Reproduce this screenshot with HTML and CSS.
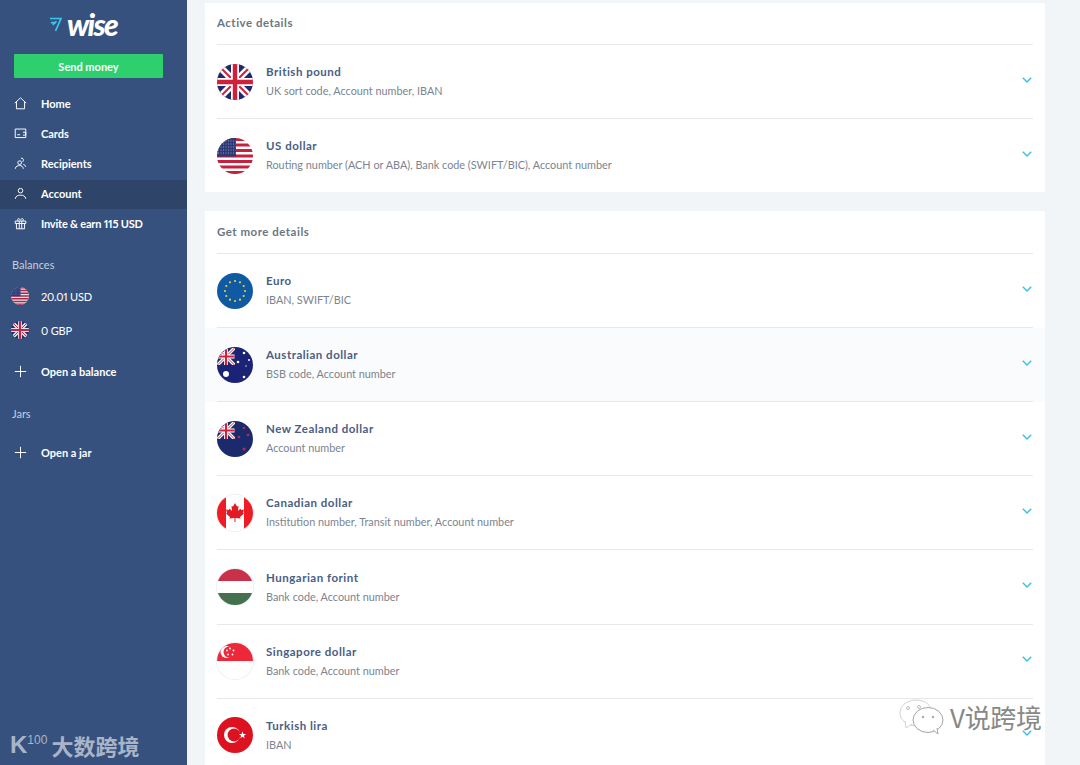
FILE: index.html
```html
<!DOCTYPE html>
<html lang="en">
<head>
    <meta charset="UTF-8">
    <meta name="viewport" content="width=device-width, initial-scale=1.0">
    <title>Wise - Account details</title>
    <link rel="stylesheet" href="styles.css">
</head>
<body>

    <svg class="defs" width="0" height="0">
        <defs>
            <symbol id="union" viewBox="0 0 36 36">
                <rect width="36" height="36" fill="#1f2a6d"/>
                <path d="M0 0L36 36M36 0L0 36" stroke="#fff" stroke-width="7"/>
                <path d="M0 0L36 36M36 0L0 36" stroke="#d3203a" stroke-width="2"/>
                <path d="M18 0V36M0 18H36" stroke="#fff" stroke-width="8"/>
                <path d="M18 0V36M0 18H36" stroke="#d3203a" stroke-width="4.4"/>
            </symbol>
            <symbol id="usa" viewBox="0 0 36 36">
                <rect width="36" height="36" fill="#fff"/>
                <path d="M0 1.5H36M0 7H36M0 12.5H36M0 18H36M0 23.500H36M0 29H36M0 34.500H36" stroke="#c5203e" stroke-width="2.800"/>
                <rect width="19" height="18.500" fill="#2b3a75"/>
                <path d="M1 3H19M1 6H19M1 9H19M1 12H19M1 15H19" stroke="#8f9ac0" stroke-width="1" stroke-dasharray="1 1.500"/>
            </symbol>
        </defs>
    </svg>

    <div class="app">
        <aside class="sidebar">
            <div class="logo">
                <svg class="logo-mark" viewBox="0 0 14 16" width="13" height="15"><path d="M1 1.500H13L7 15M2 6H6.500L4 8.500M8 4.500L6 7" fill="none" stroke="#38c6ee" stroke-width="1.800"/></svg>
                <span class="logo-text">wise</span>
            </div>
            <button class="send-btn">Send money</button>

            <nav class="nav">
                <a class="nav-item">
                    <svg class="nav-icon" viewBox="0 0 16 16"><path d="M1 7.500L8 1L15 7.500M3 6V14.500H13V6"/></svg>
                    Home
                </a>
                <a class="nav-item">
                    <svg class="nav-icon" viewBox="0 0 16 16"><path d="M1.500 2.500H14.500V13H1.500ZM4 9.500H7.500M11 10H14.500V6.500H11"/></svg>
                    Cards
                </a>
                <a class="nav-item">
                    <svg class="nav-icon" viewBox="0 0 16 16"><circle cx="7" cy="7" r="2.300"/><path d="M1.500 14.500C2 11 5 10.500 7 10.500C9 10.500 11 11.500 11.500 14.500M8.500 1.500C10.500 1 12 2.500 11.500 4.500C11.300 5 11 5.500 10.500 6M11.500 9C13 9.500 14 10.500 14.500 12"/></svg>
                    Recipients
                </a>
                <a class="nav-item active">
                    <svg class="nav-icon" viewBox="0 0 16 16"><circle cx="8" cy="4.500" r="2.800"/><path d="M1.500 14.500C2 11 5 10 8 10C11 10 14 11 14.500 14.500"/></svg>
                    Account
                </a>
                <a class="nav-item invite">
                    <svg class="nav-icon" viewBox="0 0 16 16"><path d="M1.500 5H14.500V8H1.500ZM3 8V14.500H13V8M6.500 5V14.500M9.500 5V14.500M5 5C3.500 2 6 0.500 8 4C10 0.500 12.500 2 11 5"/></svg>
                    Invite &amp; earn 115 USD
                </a>
            </nav>

            <div class="side-label balances-label">Balances</div>
            <a class="balance">
                <svg class="balance-flag"><use href="#usa"/></svg>
                20.01 USD
            </a>
            <a class="balance">
                <svg class="balance-flag"><use href="#union"/></svg>
                0 GBP
            </a>
            <a class="nav-item open-item">
                <svg class="nav-icon" viewBox="0 0 16 16"><path d="M8 1V15M1 8H15"/></svg>
                Open a balance
            </a>
            <div class="side-label jars-label">Jars</div>
            <a class="nav-item open-item">
                <svg class="nav-icon" viewBox="0 0 16 16"><path d="M8 1V15M1 8H15"/></svg>
                Open a jar
            </a>
        </aside>

        <main class="content">
            <section class="card">
                <h3 class="card-title">Active details</h3>
                <div class="row">
                    <div class="row-inner">
                        <svg class="flag"><use href="#union"/></svg>
                        <div class="row-text"><div class="currency">British pound</div><div class="fields">UK sort code, Account number, IBAN</div></div>
                        <svg class="chevron" viewBox="0 0 10 6"><path d="M0.800 0.800L5 5L9.200 0.800"/></svg>
                    </div>
                </div>
                <div class="row last">
                    <div class="row-inner">
                        <svg class="flag"><use href="#usa"/></svg>
                        <div class="row-text"><div class="currency">US dollar</div><div class="fields">Routing number (ACH or ABA), Bank code (SWIFT/BIC), Account number</div></div>
                        <svg class="chevron" viewBox="0 0 10 6"><path d="M0.800 0.800L5 5L9.200 0.800"/></svg>
                    </div>
                </div>
            </section>

            <section class="card">
                <h3 class="card-title tall">Get more details</h3>
                <div class="row">
                    <div class="row-inner">
                        <svg class="flag" viewBox="0 0 36 36">
                            <rect width="36" height="36" fill="#0f5aa3"/>
                            <g fill="#e3d23c"><circle cx="18" cy="8" r="1.100"/><circle cx="23" cy="9.300" r="1.100"/><circle cx="26.700" cy="13" r="1.100"/><circle cx="28" cy="18" r="1.100"/><circle cx="26.700" cy="23" r="1.100"/><circle cx="23" cy="26.700" r="1.100"/><circle cx="18" cy="28" r="1.100"/><circle cx="13" cy="26.700" r="1.100"/><circle cx="9.300" cy="23" r="1.100"/><circle cx="8" cy="18" r="1.100"/><circle cx="9.300" cy="13" r="1.100"/><circle cx="13" cy="9.300" r="1.100"/></g>
                        </svg>
                        <div class="row-text"><div class="currency">Euro</div><div class="fields">IBAN, SWIFT/BIC</div></div>
                        <svg class="chevron" viewBox="0 0 10 6"><path d="M0.800 0.800L5 5L9.200 0.800"/></svg>
                    </div>
                </div>
                <div class="row hovered">
                    <div class="row-inner">
                        <svg class="flag" viewBox="0 0 36 36">
                            <rect width="36" height="36" fill="#1a2376"/>
                            <use href="#union" x="0" y="1" width="18" height="17"/>
                            <g fill="#fff"><circle cx="9" cy="27" r="3"/><circle cx="27" cy="6" r="1.300"/><circle cx="21" cy="15" r="1.300"/><circle cx="32" cy="13" r="1"/><circle cx="27" cy="30" r="1.300"/><circle cx="29" cy="19" r="0.700"/></g>
                        </svg>
                        <div class="row-text"><div class="currency">Australian dollar</div><div class="fields">BSB code, Account number</div></div>
                        <svg class="chevron" viewBox="0 0 10 6"><path d="M0.800 0.800L5 5L9.200 0.800"/></svg>
                    </div>
                </div>
                <div class="row">
                    <div class="row-inner">
                        <svg class="flag" viewBox="0 0 36 36">
                            <rect width="36" height="36" fill="#1a2a6c"/>
                            <use href="#union" x="0" y="1" width="18" height="17"/>
                            <g fill="#c2264a"><circle cx="27" cy="7" r="1.300"/><circle cx="22" cy="16" r="1.300"/><circle cx="31" cy="14" r="1.300"/><circle cx="27" cy="28" r="1.500"/></g>
                        </svg>
                        <div class="row-text"><div class="currency">New Zealand dollar</div><div class="fields">Account number</div></div>
                        <svg class="chevron" viewBox="0 0 10 6"><path d="M0.800 0.800L5 5L9.200 0.800"/></svg>
                    </div>
                </div>
                <div class="row">
                    <div class="row-inner">
                        <svg class="flag outlined" viewBox="0 0 36 36">
                            <rect width="36" height="36" fill="#fff"/>
                            <path d="M0 0H9V36H0ZM27 0H36V36H27Z" fill="#ee1c25"/>
                            <path d="M18 8L20 11.500L21.500 11L21 16L23.500 13.500L24 15L27 14.500L26 18L27 18.500L23 22L23.500 23.500L18.500 23V27H17.500V23L12.500 23.500L13 22L9 18.500L10 18L9 14.500L12 15L12.500 13.500L15 16L14.500 11L16 11.500Z" fill="#e01b24"/>
                        </svg>
                        <div class="row-text"><div class="currency">Canadian dollar</div><div class="fields">Institution number, Transit number, Account number</div></div>
                        <svg class="chevron" viewBox="0 0 10 6"><path d="M0.800 0.800L5 5L9.200 0.800"/></svg>
                    </div>
                </div>
                <div class="row">
                    <div class="row-inner">
                        <svg class="flag outlined" viewBox="0 0 36 36">
                            <rect width="36" height="12" fill="#c9304a"/>
                            <rect y="12" width="36" height="12" fill="#fff"/>
                            <rect y="24" width="36" height="12" fill="#44704f"/>
                        </svg>
                        <div class="row-text"><div class="currency">Hungarian forint</div><div class="fields">Bank code, Account number</div></div>
                        <svg class="chevron" viewBox="0 0 10 6"><path d="M0.800 0.800L5 5L9.200 0.800"/></svg>
                    </div>
                </div>
                <div class="row">
                    <div class="row-inner">
                        <svg class="flag outlined" viewBox="0 0 36 36">
                            <rect width="36" height="18" fill="#ed2939"/>
                            <rect y="18" width="36" height="18" fill="#fff"/>
                            <circle cx="9.500" cy="9" r="6" fill="#fff"/>
                            <circle cx="12" cy="9" r="5.500" fill="#ed2939"/>
                            <g fill="#fff"><circle cx="13" cy="5.500" r="0.900"/><circle cx="16.500" cy="7.500" r="0.900"/><circle cx="15.500" cy="11.500" r="0.900"/><circle cx="11" cy="11.500" r="0.900"/><circle cx="10" cy="7.500" r="0.900"/></g>
                        </svg>
                        <div class="row-text"><div class="currency">Singapore dollar</div><div class="fields">Bank code, Account number</div></div>
                        <svg class="chevron" viewBox="0 0 10 6"><path d="M0.800 0.800L5 5L9.200 0.800"/></svg>
                    </div>
                </div>
                <div class="row last">
                    <div class="row-inner">
                        <svg class="flag" viewBox="0 0 36 36">
                            <rect width="36" height="36" fill="#dc1221"/>
                            <circle cx="15" cy="18" r="8" fill="#fff"/>
                            <circle cx="17" cy="18" r="6.400" fill="#dc1221"/>
                            <path d="M25.500 14.500L26.400 17.100L29 17.100L26.900 18.700L27.700 21.300L25.500 19.700L23.300 21.300L24.100 18.700L22 17.100L24.600 17.100Z" fill="#fff"/>
                        </svg>
                        <div class="row-text"><div class="currency">Turkish lira</div><div class="fields">IBAN</div></div>
                        <svg class="chevron" viewBox="0 0 10 6"><path d="M0.800 0.800L5 5L9.200 0.800"/></svg>
                    </div>
                </div>
            </section>
        </main>
    </div>

    <!-- watermarks over the screenshot -->
    <div class="mark-left">
        <span class="mark-logo">K<sup>100</sup></span>
        <span class="mark-name">大数跨境</span>
    </div>
    <div class="mark-right">
        <svg class="mark-bubbles" viewBox="0 0 46 36" width="46" height="36">
            <path d="M19 27C9 27 1 22 1 14C1 6 9 1 17 1C24 1 30 4 32 10" fill="#fff" stroke="#d2d2d2"/>
            <path d="M6 22L7 29L13 25" fill="#fff" stroke="#d2d2d2"/>
            <ellipse cx="29" cy="21" rx="15" ry="12.500" fill="#fff" stroke="#a5a5a5"/>
            <path d="M34 31L39 35L38 29" fill="#fff" stroke="#a5a5a5"/>
            <circle cx="9" cy="9" r="1.500" fill="none" stroke="#bbb"/>
            <circle cx="20" cy="8" r="1.500" fill="none" stroke="#bbb"/>
            <circle cx="24" cy="18" r="1.200" fill="#aaa"/>
            <circle cx="34" cy="18" r="1.200" fill="#aaa"/>
        </svg>
        <span class="mark-title">V说跨境</span>
    </div>

</body>
</html>
```

FILE: styles.css
```css
html, body {
    margin: 0;
    height: 765px;
    overflow: hidden;
}
body {
    font-family: Lato, Arial, sans-serif;
    font-variant-numeric: proportional-nums;
    background-color: #f2f5f7;
    position: relative;
}
.defs {
    position: absolute;
}
.app {
    display: flex;
    height: 765px;
}

/* sidebar */
.sidebar {
    width: 187px;
    flex: none;
    background: #37517e;
    color: white;
}
.logo {
    height: 54px;
    padding: 12px 0 0 49px;
    box-sizing: border-box;
    display: flex;
    gap: 5px;
}
.logo-mark {
    margin-top: 5px;
}
.logo-text {
    font-size: 30px;
    line-height: 24px;
    font-weight: 900;
    font-style: italic;
    letter-spacing: -1.700px;
}
.send-btn {
    display: block;
    width: 149px;
    height: 24px;
    margin: 0 0 12px 14px;
    background: #2ed06e;
    border: none;
    border-radius: 1px;
    color: white;
    font-family: inherit;
    font-size: 11px;
    font-weight: 700;
    padding: 0;
}
.nav {
    display: flex;
    flex-direction: column;
    gap: 1px;
}
.nav-item {
    display: flex;
    align-items: center;
    gap: 14px;
    height: 29px;
    box-sizing: border-box;
    padding: 0 0 2px 14px;
    font-size: 11px;
    font-weight: 700;
}
.nav-item.active {
    background: #2f4469;
}
.nav-item.invite {
    letter-spacing: -0.200px;
}
.nav-icon {
    width: 13px;
    height: 13px;
    flex: none;
    fill: none;
    stroke: white;
    stroke-width: 1.200;
}
.side-label {
    font-size: 11px;
    color: #c6cfdd;
    padding-left: 12px;
}
.balances-label {
    margin-top: 19px;
}
.jars-label {
    margin-top: 20px;
}
.balance {
    display: flex;
    align-items: center;
    gap: 12px;
    padding-left: 11px;
    margin-top: 16px;
    height: 18px;
    font-size: 11px;
    letter-spacing: -0.200px;
}
.balance-flag {
    width: 18px;
    height: 18px;
    border-radius: 50%;
    opacity: 0.85;
}
.open-item {
    margin-top: 19px;
}

/* main column */
.content {
    flex: 1;
    padding: 3px 35px 0 18px;
    display: flex;
    flex-direction: column;
    gap: 19px;
}
.card {
    background: white;
}
.card-title {
    margin: 0 12px;
    height: 42px;
    line-height: 39px;
    box-sizing: border-box;
    border-bottom: 1px solid #e6e8eb;
    font-size: 11.500px;
    font-weight: 700;
    letter-spacing: 0.5px;
    color: #6b7684;
}
.card-title.tall {
    height: 43px;
    line-height: 41px;
}
.row.hovered {
    background: #fafbfc;
}
.row-inner {
    margin: 0 12px;
    height: 74.100px;
    box-sizing: border-box;
    border-bottom: 1px solid #e6e8eb;
    display: flex;
    align-items: center;
}
.row.last .row-inner {
    height: 73px;
    border-bottom: none;
}
.flag {
    width: 36px;
    height: 36px;
    border-radius: 50%;
    flex: none;
    margin-right: 13px;
}
.flag.outlined {
    box-shadow: 0 0 0 1px #eceef0;
}
.row-text {
    flex: 1;
}
.currency {
    font-size: 11.500px;
    font-weight: 700;
    line-height: 18px;
    color: #4a5d84;
    letter-spacing: 0.5px;
}
.fields {
    font-size: 10.850px;
    line-height: 18px;
    margin-top: 1px;
    color: #7b8490;
}
.chevron {
    width: 10px;
    height: 6px;
    flex: none;
    margin: 0 1px 4px 0;
    fill: none;
    stroke: #37c0e8;
    stroke-width: 1.400;
}

/* watermarks */
.mark-left {
    position: absolute;
    left: 10px;
    top: 731px;
    display: flex;
    align-items: center;
    gap: 4px;
    color: #a9b4c8;
    font-family: "Noto Sans CJK SC", sans-serif;
    font-weight: 700;
}
.mark-logo {
    font-family: "Liberation Sans", sans-serif;
    font-size: 24px;
    line-height: 28px;
}
.mark-logo sup {
    font-size: 12px;
    font-weight: 400;
    line-height: 0;
}
.mark-name {
    font-size: 22px;
    line-height: 28px;
}
.mark-right {
    position: absolute;
    left: 899px;
    top: 698px;
    display: flex;
    align-items: center;
    gap: 5px;
}
.mark-title {
    font-family: "Noto Sans CJK SC", sans-serif;
    font-size: 26px;
    letter-spacing: -0.300px;
    color: #888;
    text-shadow: 1px 1px 0 #fff;
}
```
